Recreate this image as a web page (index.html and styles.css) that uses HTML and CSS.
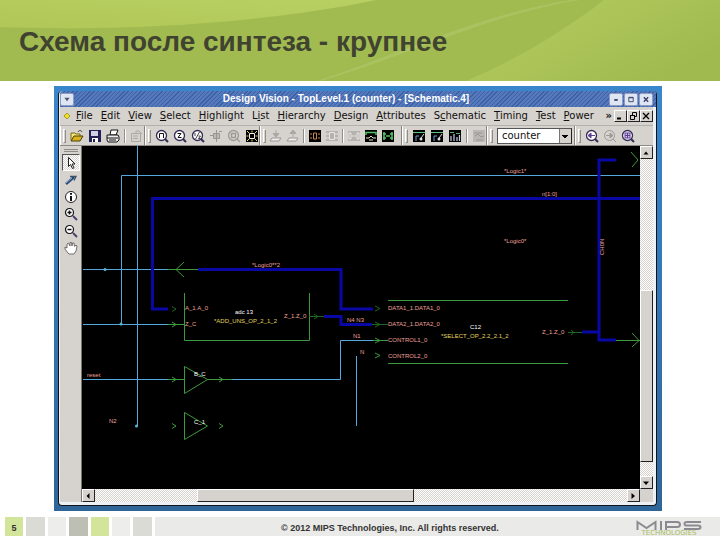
FILE: index.html
```html
<!DOCTYPE html>
<html lang="ru">
<head>
<meta charset="utf-8">
<title>Схема после синтеза - крупнее</title>
<link rel="stylesheet" href="styles.css">
</head>
<body>
<svg class="sprite" aria-hidden="true">
  <defs>
    <symbol id="open" viewBox="0 0 14 14"><path d="M1 11V4h4l1 1h4v2" fill="#f5e27a" stroke="#7a6a10"/><path d="M1 12l3-5h9l-3 5z" fill="#d8b21c" stroke="#4a3f08"/><path d="M8 3c1-2 3-2 4 0" fill="none" stroke="#333"/></symbol>
    <symbol id="save" viewBox="0 0 14 14"><path d="M1 1h12v12H1z" fill="#232058"/><path d="M3 2h7v5H3z" fill="#cfd0e6"/><path d="M4 9h6v4H4z" fill="#fff"/><path d="M5 10h2v3H5z" fill="#232058"/></symbol>
    <symbol id="print" viewBox="0 0 14 14"><path d="M4 6l1-5h7l-2 5z" fill="#fff" stroke="#111"/><path d="M1 6h11l1 2v3l-2 2H2l-1-2z" fill="#eee" stroke="#111"/><path d="M1 9h11M3 11h7" stroke="#111"/></symbol>
    <symbol id="props" viewBox="0 0 14 14"><path d="M1.500 4.500h9v8h-9zM3 7h5M3 9.500h5M6 4V2h3l3 3" fill="none" stroke="#aaa8a4"/></symbol>
    <symbol id="lens" viewBox="0 0 14 14"><circle cx="6.500" cy="6.500" r="5" fill="#fff" stroke="#332b55" stroke-width="1.300"/><path d="M10 10l3 3" stroke="#332b55" stroke-width="2"/></symbol>
    <symbol id="fit" viewBox="0 0 14 14"><use href="#lens"/><path d="M4.500 9V4.500h4V9" fill="none" stroke="#111"/></symbol>
    <symbol id="ztwo" viewBox="0 0 14 14"><use href="#lens"/><path d="M4.500 4.500h3.500L5 8.500h3.500" fill="none" stroke="#111"/></symbol>
    <symbol id="zhalf" viewBox="0 0 14 14"><use href="#lens"/><path d="M4 4v3M8.500 3l-4 7M7.500 7h2L7.500 9.500h2" fill="none" stroke="#111" stroke-width=".8"/></symbol>
    <symbol id="target" viewBox="0 0 14 14"><path d="M4.500 4.500h6v5h-6zM7.500 1v12M1 6.500h3M10 2.500h3" fill="#bbb9b5" stroke="#989691"/></symbol>
    <symbol id="glens" viewBox="0 0 14 14"><circle cx="6.500" cy="6.500" r="5" fill="none" stroke="#9d9b97" stroke-width="1.300"/><path d="M4.500 4.500h4v4h-4zM10 10l3 3" fill="none" stroke="#9d9b97" stroke-width="1.400"/></symbol>
    <symbol id="full" viewBox="0 0 14 14"><path d="M1 1h12v12H1z"/><path d="M4.500 4.500h5v5h-5z" fill="none" stroke="#eee"/><path d="M7 1.500v2M7 10.500v2M1.500 7h2M10.500 7h2M2 2l2 2M12 2l-2 2M2 12l2-2M12 12l-2-2" stroke="#e8e04a"/></symbol>
    <symbol id="down" viewBox="0 0 14 14"><path d="M7 1v4M4 4.500h6L7 8z" fill="#aaa8a4" stroke="#aaa8a4"/><path d="M1 12l2-3h9l-2 3z" fill="#eee" stroke="#999793"/></symbol>
    <symbol id="up" viewBox="0 0 14 14"><path d="M7 8V4M4 4.500h6L7 1z" fill="#aaa8a4" stroke="#aaa8a4"/><path d="M1 12l2-3h9l-2 3z" fill="#eee" stroke="#999793"/></symbol>
    <symbol id="chip" viewBox="0 0 14 14"><path d="M1 1h12v12H1z"/><path d="M5.500 4v6h3V4zM2 5h2M2 9h2M10 5h2M10 9h2" fill="none" stroke="#c9854c"/></symbol>
    <symbol id="gchip" viewBox="0 0 14 14"><path d="M1 2h12v10H1z" fill="#b5b3af"/><path d="M4.500 3.500h5v7h-5zM1 5h3M1 9h3M10 5h3M10 9h3" fill="none" stroke="#e8e6e2"/></symbol>
    <symbol id="gpair" viewBox="0 0 14 14"><path d="M1 2h12v10H1z" fill="#b5b3af"/><path d="M2 4v6h2V4zM10 4v6h2V4zM5 7h4" fill="none" stroke="#e8e6e2"/></symbol>
    <symbol id="loop" viewBox="0 0 14 14"><path d="M1 1h12v12H1z"/><path d="M2 6V3.500h10V6" fill="none" stroke="#56c060" stroke-width="1.500"/><path d="M2 9h3l2-2 2 2h3M5 11h4" fill="none" stroke="#e6e6c8"/></symbol>
    <symbol id="pair" viewBox="0 0 14 14"><path d="M1 1h12v12H1z"/><path d="M3 3v8M2 5h3M2 9h3M11 3v8M9 5h3M9 9h3M5 7h4" stroke="#4fc766" stroke-width="1.500"/></symbol>
    <symbol id="graph" viewBox="0 0 14 14"><path d="M1 1h12v12H1z"/><path d="M1 3.500h12" stroke="#5bc47a"/><path d="M4 12V7h3" fill="none" stroke="#6aa0d8"/><path d="M12 5l-3 4" stroke="#ddd"/><circle cx="9" cy="10" r="1.500" fill="#ddd"/></symbol>
    <symbol id="bars" viewBox="0 0 14 14"><path d="M1 1h12v12H1z"/><path d="M2 3.500h4M8 4.500h4" stroke="#56ae70"/><path d="M3 12V7M6 12V5M9 12V8M11.500 12V6" stroke="#c8cce8" stroke-width="1.200"/></symbol>
    <symbol id="gbars" viewBox="0 0 14 14"><path d="M1 1h12v12H1z" fill="#b9b7b3"/><path d="M2 4h8M3 7l3-2 3 3 3-1M4 11h7" fill="none" stroke="#999793"/></symbol>
    <symbol id="prev" viewBox="0 0 14 14"><use href="#lens"/><path d="M3 6.500L6 4v5zM5 6.500h5" fill="#5b3d91" stroke="#5b3d91"/></symbol>
    <symbol id="next" viewBox="0 0 14 14"><circle cx="6.500" cy="6.500" r="5" fill="none" stroke="#9d9b97"/><path d="M10 6.500L7 4v5zM3 6.500h5M10 10l3 3" fill="#9d9b97" stroke="#9d9b97"/></symbol>
    <symbol id="sel" viewBox="0 0 14 14"><use href="#lens"/><path d="M4 4h5v5H4zM4 6.500h5M6.500 4v5" fill="#d9c9ef" stroke="#5b3d91"/></symbol>
    <symbol id="cursor" viewBox="0 0 14 14"><path d="M4.500 1.500v9l2-2 2 4 1.500-.700-2-3.800h3z" fill="#fff" stroke="#222"/></symbol>
    <symbol id="pencil" viewBox="0 0 14 14"><path d="M2 11l8-7" stroke="#28456e" stroke-width="2.500"/><path d="M6 3.500h6l-2 4" fill="none" stroke="#38506e" stroke-width="1.300"/><path d="M2 10l6-5" stroke="#8ab3e0"/></symbol>
    <symbol id="info" viewBox="0 0 14 14"><circle cx="7" cy="7" r="5.500" fill="#fff" stroke="#222"/><path d="M7 3v1.800M7 6v5" stroke="#111" stroke-width="2"/></symbol>
    <symbol id="zin" viewBox="0 0 14 14"><circle cx="5.500" cy="5.500" r="4" fill="#fff" stroke="#111" stroke-width="1.200"/><path d="M3.500 5.500h4M5.500 3.500v4" stroke="#111" stroke-width="1.500"/><path d="M9 9l4 4" stroke="#4a4072" stroke-width="2"/></symbol>
    <symbol id="zout" viewBox="0 0 14 14"><circle cx="5.500" cy="5.500" r="4" fill="#fff" stroke="#111" stroke-width="1.200"/><path d="M3.500 5.500h4" stroke="#111" stroke-width="1.500"/><path d="M9 9l4 4" stroke="#4a4072" stroke-width="2"/></symbol>
    <symbol id="hand" viewBox="0 0 14 14"><path d="M4 12L1 8V6l2 1V3l1.500-1L6 5V1.500h1.500L8 5l.500-3H10l.500 3.500L12 4l1 1-1 5-2 3H5z" fill="#fff" stroke="#55524e" stroke-width=".8"/></symbol>
  </defs>
</svg>

<header class="banner">
  <svg class="banner-art" viewBox="0 0 720 81" preserveAspectRatio="none" aria-hidden="true">
    <defs>
      <linearGradient id="leaf" x1="0" y1="1" x2="1" y2="0"><stop offset="0" stop-color="#b1c858"/><stop offset="1" stop-color="#b8cf62"/></linearGradient>
      <linearGradient id="right" x1="0" y1="0" x2="1" y2=".6"><stop offset="0" stop-color="#b3ca5a"/><stop offset=".35" stop-color="#b0c75a"/><stop offset="1" stop-color="#a0ba50"/></linearGradient>
    </defs>
    <path d="M0 0h376C280 20 150 32 0 27z" fill="url(#leaf)"/>
    <path d="M604 0h116v81H466C520 58 565 30 604 0z" fill="url(#right)"/>
    <path d="M317 81C410 50 480 14 572 0h8C490 14 415 53 321 81z" fill="#aac361"/>
  </svg>
  <h1>Схема после синтеза - крупнее</h1>
</header>

<main class="stage">
  <div class="desktop">
    <section class="window">
      <div class="titlebar">
        <button class="wm" aria-label="Menu"><svg viewBox="0 0 10 8"><path d="M2 2l3 4 3-4z" fill="#4b5470"/></svg></button>
        <span class="caption">Design Vision - TopLevel.1 (counter) - [Schematic.4]</span>
        <button class="wm" aria-label="Minimize"><svg viewBox="0 0 10 8"><path d="M3 4.500h4" stroke="#333c66" stroke-width="2"/></svg></button>
        <button class="wm" aria-label="Maximize"><svg viewBox="0 0 10 8"><path d="M2.500 1.500h5v5h-5zM2.500 2h5" fill="none" stroke="#333c66"/></svg></button>
        <button class="wm" aria-label="Close"><svg viewBox="0 0 10 8"><path d="M2.500 1.500l5 5M7.500 1.500l-5 5" stroke="#333c66" stroke-width="1.500"/></svg></button>
      </div>

      <nav class="menubar">
        <svg class="gem" viewBox="0 0 8 8" aria-hidden="true"><path d="M4 1l3 3-3 3-3-3z" fill="#f1e21c" stroke="#a39a2c"/></svg>
        <button><u>F</u>ile</button><button><u>E</u>dit</button><button><u>V</u>iew</button><button><u>S</u>elect</button><button><u>H</u>ighlight</button><button>L<u>i</u>st</button><button><u>H</u>ierarchy</button><button><u>D</u>esign</button><button><u>A</u>ttributes</button><button>S<u>c</u>hematic</button><button><u>T</u>iming</button><button><u>T</u>est</button><button><u>P</u>ower</button>
        <button class="more">»</button>
        <span class="mdi">
          <button aria-label="Minimize"><svg viewBox="0 0 10 10"><path d="M2 7.500h4" stroke="#000" stroke-width="2"/></svg></button>
          <button aria-label="Restore"><svg viewBox="0 0 10 10"><path d="M4.500 4V1.500h4v4H7M2.500 4.500h4v4h-4zM2 4.500h5" fill="none" stroke="#000"/></svg></button>
          <button aria-label="Close"><svg viewBox="0 0 10 10"><path d="M2 2l6 6M8 2l-6 6" stroke="#000" stroke-width="1.300"/></svg></button>
        </span>
      </nav>

      <div class="toolbars">
        <div class="group wide"><i class="grip"></i><button aria-label="Open"><svg><use href="#open"/></svg></button><button aria-label="Save"><svg><use href="#save"/></svg></button><button aria-label="Print"><svg><use href="#print"/></svg></button><i class="sep"></i><button aria-label="Properties"><svg><use href="#props"/></svg></button></div>
        <div class="group wide"><i class="grip"></i><button aria-label="Fit"><svg><use href="#fit"/></svg></button><button aria-label="Zoom 2"><svg><use href="#ztwo"/></svg></button><button aria-label="Zoom 1/2"><svg><use href="#zhalf"/></svg></button><button aria-label="Center"><svg><use href="#target"/></svg></button><button aria-label="Zoom selection"><svg><use href="#glens"/></svg></button><button aria-label="Full"><svg><use href="#full"/></svg></button></div>
        <div class="group"><i class="grip"></i><button aria-label="Push down"><svg><use href="#down"/></svg></button><button aria-label="Pop up"><svg><use href="#up"/></svg></button><i class="sep"></i><button aria-label="Schematic"><svg><use href="#chip"/></svg></button><button aria-label="Symbol"><svg><use href="#gchip"/></svg></button><i class="sep"></i><button aria-label="Paths"><svg><use href="#gpair"/></svg></button><button aria-label="Fan"><svg><use href="#loop"/></svg></button><button aria-label="Pins"><svg><use href="#pair"/></svg></button></div>
        <div class="group wide"><i class="grip"></i><button aria-label="Slack"><svg><use href="#graph"/></svg></button><button aria-label="Load"><svg><use href="#graph"/></svg></button><button aria-label="Histogram"><svg><use href="#bars"/></svg></button><i class="sep"></i><button aria-label="Chart"><svg><use href="#gbars"/></svg></button></div>
        <div class="group wide pick"><i class="grip"></i><select aria-label="Design"><option>counter</option></select></div>
        <div class="group wide last"><i class="grip"></i><button aria-label="Previous"><svg><use href="#prev"/></svg></button><button aria-label="Next"><svg><use href="#next"/></svg></button><button aria-label="Selection"><svg><use href="#sel"/></svg></button></div>
      </div>

      <div class="work">
        <div class="tools">
          <i class="hgrip"></i>
          <button class="on" aria-label="Select"><svg><use href="#cursor"/></svg></button>
          <button aria-label="Edit"><svg><use href="#pencil"/></svg></button>
          <button aria-label="Info"><svg><use href="#info"/></svg></button>
          <button aria-label="Zoom in"><svg><use href="#zin"/></svg></button>
          <button aria-label="Zoom out"><svg><use href="#zout"/></svg></button>
          <button aria-label="Pan"><svg><use href="#hand"/></svg></button>
        </div>

        <div class="canvas">
          <svg class="schematic" viewBox="82 146 558 343" preserveAspectRatio="xMinYMin meet">
            <g class="net">
              <path d="M137.500 146v280"/>
              <path d="M640 175.500H121.500V324"/>
              <path d="M83 269.500h85M83 324.500h85M83 379.500h85M232 379.500h108.500v-39H373M356.500 356v70"/>
            </g>
            <g class="dots"><circle cx="105" cy="269.500" r="1.500"/><circle cx="121" cy="324" r="1.500"/><circle cx="136.500" cy="426" r="1.500"/></g>
            <g class="bus">
              <path d="M640 198.500H152.500V309H168"/>
              <path d="M198 269.500h143V309h32"/>
              <path d="M324 316.500h17v8h31"/>
              <path d="M616 160H599v180h17M582 332h17"/>
            </g>
            <g class="cell">
              <path d="M184.500 293v47.500h125V293M388 300.500h180M388 363.500h180"/>
              <path d="M168 269.500h30M168 324.500h17M168 379.500h16M207 379.500h25M373 340.500h15M616 340.500h24"/>
              <path d="M184.500 366.500v27l23-14zM184.500 412.500v27l23-13.500z"/>
              <path d="M184 262l-8 7.500 8 7.500M632 333l7 7.500-7 6.500M631 152l7 8-6 7"/>
              <path d="M172 322l4 2.500-4 2.500M172 377l4 2.500-4 2.500M219 377l4 2.500-4 2.500M172 423.500l4 2.500-4 2.500M219 423.500l4 2.500-4 2.500M375 338l5 2.500-5 2.500M375 353l5 2.500-5 2.500"/>
            </g>
            <g class="cell dim"><path d="M309 316.500h15M372 324.500h16M568 332.500h14M172 306.500l4 2.500-4 2.500M314 314l4 2.500-4 2.500M375 306l5 2.500-5 2.500M375 322l5 2.500-5 2.500M571 330l3 2.500-3 2.500"/></g>
            <g class="pin">
              <text x="504" y="173">*Logic1*</text><text x="542" y="196">n[1:0]</text><text x="504" y="243">*Logic0*</text>
              <text x="252" y="267">*Logic0**2</text>
              <text x="185" y="310">A_1.A_0</text><text x="185" y="326">Z_C</text>
              <text x="284" y="318">Z_1.Z_0</text><text x="347" y="322">N4 N3</text><text x="353" y="338">N1</text><text x="360" y="354">N</text>
              <text x="388" y="310">DATA1_1.DATA1_0</text><text x="388" y="326">DATA2_1.DATA2_0</text><text x="388" y="342">CONTROL1_0</text><text x="388" y="358">CONTROL2_0</text>
              <text x="542" y="334">Z_1.Z_0</text>
              <text x="87" y="377">reset</text><text x="109" y="423">N2</text>
              <text transform="translate(604 255) rotate(-90)">CH0N</text>
            </g>
            <g class="name"><text x="235" y="314">adc 13</text><text x="470" y="329">C12</text><text x="194" y="376">B_C</text><text x="194" y="424">C_1</text></g>
            <g class="ref"><text x="214" y="323">*ADD_UNS_OP_2_1_2</text><text x="441" y="338">*SELECT_OP_2.2_2.1_2</text></g>
          </svg>
        </div>

        <div class="vscroll">
          <button aria-label="Up"><svg viewBox="0 0 8 8"><path d="M1.500 5.500L4 2.500l2.500 3z"/></svg></button>
          <span class="gap-a"></span><span class="thumb"></span><span class="gap-b"></span>
          <button aria-label="Down"><svg viewBox="0 0 8 8"><path d="M1 2.500L4 6l3-3.500z"/></svg></button>
        </div>
        <div class="hscroll">
          <button aria-label="Left"><svg viewBox="0 0 8 8"><path d="M5.500 1L2.500 4l3 3z"/></svg></button>
          <span class="gap-a"></span><span class="thumb"></span><span class="gap-b"></span>
          <button aria-label="Right"><svg viewBox="0 0 8 8"><path d="M2.500 1L6 4 2.500 7z"/></svg></button>
        </div>
      </div>
    </section>
  </div>
</main>

<footer class="footer">
  <span class="tile lime">5</span><span class="tile ash"></span><span class="tile pale"></span><span class="tile stone"></span><span class="tile lime"></span><span class="tile pale"></span><span class="tile ash"></span>
  <div class="strip">
    <span class="legal">© 2012 MIPS Technologies, Inc. All rights reserved.</span>
    <span class="logo">
      <svg viewBox="0 0 66 10" role="img" aria-label="MIPS"><path d="M1.500 10V2l9 6 9-6v8M25 1v9M30 10V2h11q3 0 3 2.500T41 7H31M65 2H51q-2.500 0-2.500 1.800T51 5.500h11q2.500 0 2.500 1.700T62 9H48" fill="none" stroke="#8c8a90" stroke-width="2"/></svg>
      <span>TECHNOLOGIES</span>
    </span>
  </div>
</footer>
</body>
</html>
```
FILE: styles.css
```css
* { box-sizing: border-box; }

body {
  margin: 0;
  min-height: 100vh;
  display: flex;
  flex-direction: column;
  background: #fff;
  color: #333;
  font-family: "Liberation Sans", Arial, sans-serif;
}

button {
  margin: 0;
  padding: 0;
  border: 0;
  background: none;
  color: inherit;
  font: inherit;
}

svg { display: block; }
.sprite { position: absolute; width: 0; height: 0; }

/* Banner */
.banner {
  position: relative;
  height: 81px;
  padding: 27px 19px 0;
  background: #a1bb50;
}
.banner-art { position: absolute; inset: 0; width: 100%; height: 100%; }
.banner h1 {
  position: relative;
  margin: 0;
  color: #3f4330;
  font-size: 28px;
  line-height: 30px;
}

/* Desktop and window */
.stage { flex: 1; display: flex; padding: 5px 58px 6px 54px; }
.desktop {
  flex: 1;
  display: flex;
  min-width: 0;
  padding: 5px 5px 5px 4px;
  background: linear-gradient(#3a86cc, #2f669a);
}
.window {
  flex: 1;
  display: flex;
  flex-direction: column;
  min-width: 0;
  padding: 0 3px 3px 1px;
  border: 1px solid #10131c;
  border-top: 0;
  border-radius: 4px;
  background: #eef1f3;
}

.titlebar {
  display: flex;
  align-items: center;
  height: 16px;
  margin-right: -3px;
  padding: 0 2px 0 0;
  border-radius: 3px 3px 0 0;
  background: repeating-linear-gradient(135deg, #3d61a6 0 1px, #5579bb 1px 3px);
}
.caption {
  flex: 1;
  padding-left: 8px;
  color: #fff;
  font-size: 10px;
  font-weight: bold;
  line-height: 16px;
  text-align: center;
  white-space: nowrap;
}
.wm {
  width: 14px;
  height: 13px;
  margin-right: 1px;
  padding: 2px 1px;
  border: 1px solid #8c9cc4;
  border-radius: 2px;
  background: #dfe5f3;
}
.wm svg { width: 10px; height: 7px; }

.menubar {
  display: flex;
  align-items: center;
  gap: 8px;
  height: 18px;
  padding-left: 3px;
  background: #d6d3ce;
  color: #111;
  font: 10px/16px "DejaVu Sans", sans-serif;
}
.gem { flex: none; width: 8px; height: 8px; margin-right: -3px; }
.menubar .more { margin-left: auto; font-weight: bold; }
.mdi { display: flex; margin-left: -6px; }
.mdi button {
  width: 13px;
  height: 12px;
  border: 1px solid;
  border-color: #fff #222 #222 #fff;
}
.mdi svg { width: 10px; height: 10px; }

.toolbars {
  display: flex;
  height: 21px;
  background: #d6d3ce;
  border-top: 1px solid #b4b1ac;
  border-bottom: 1px solid #8d8a86;
}
.group {
  display: flex;
  align-items: center;
  gap: 3px;
  padding: 0 6px 0 2px;
  border-left: 1px solid #fff;
  border-right: 1px solid #85827e;
}
.group.wide { gap: 4px; padding-right: 0; }
.group svg { width: 14px; height: 14px; }
.group.last { border-right: 0; }
.grip {
  width: 3px;
  height: 14px;
  border: 1px solid;
  border-color: #fff #918e8a #918e8a #fff;
}
.sep { width: 2px; height: 14px; border-left: 1px solid #918e8a; border-right: 1px solid #fff; }
.group.pick { padding-right: 2px; }
.pick select {
  width: 75px;
  height: 16px;
  padding: 0 4px;
  appearance: none;
  border: 1px solid #555;
  border-right-color: #222;
  border-radius: 0;
  color: #111;
  font: 10px/14px "DejaVu Sans", sans-serif;
  background:
    conic-gradient(from -45deg at 50% 100%, #000 90deg, transparent 0) right 3px top 6px / 6px 3px no-repeat,
    linear-gradient(90deg, #777 1px, #d6d3ce 1px) right / 12px 100% no-repeat,
    #fff;
}

/* Work area */
.work {
  flex: 1;
  display: grid;
  grid-template-columns: 22px minmax(0, 1fr) 13px;
  grid-template-rows: minmax(0, 1fr) 13px;
  background: #d6d3ce;
}
.tools {
  grid-row: 1 / 3;
  display: flex;
  flex-direction: column;
  align-items: center;
  padding-top: 3px;
  border-right: 1px solid #77746f;
  background: #d6d3ce;
}
.tools button { width: 18px; height: 17px; padding: 1px 2px; }
.tools svg { width: 14px; height: 14px; }
.tools .on { padding: 0 1px; border: 1px solid; border-color: #555 #fff #fff #555; }
.hgrip { width: 14px; height: 3px; margin-bottom: 2px; border-top: 1px solid #8d8a86; border-bottom: 1px solid #8d8a86; }

.vscroll, .hscroll, .tools .on {
  background: repeating-conic-gradient(#fff 0 25%, #d6d3ce 0 50%) 0 0 / 2px 2px;
}
.vscroll { display: flex; flex-direction: column; }
.hscroll { grid-column: 2; display: flex; }
.vscroll button, .hscroll button, .thumb {
  border: 1px solid;
  border-color: #fff #222 #222 #fff;
  background: #d6d3ce;
}
.vscroll button, .hscroll button { flex: none; width: 13px; height: 13px; padding: 1px; }
.vscroll svg, .hscroll svg { width: 8px; height: 8px; }
.vscroll .gap-a { flex: 132; }
.vscroll .thumb { flex: 172; }
.vscroll .gap-b { flex: 14; }
.hscroll .gap-a { flex: 102; }
.hscroll .thumb { flex: 216; }
.hscroll .gap-b { flex: 214; }

.canvas { min-width: 0; min-height: 0; background: #000; overflow: hidden; }
.schematic { width: 100%; }
.schematic path { fill: none; }
.net { stroke: #55a8dc; stroke-width: 1; }
.dots { fill: #5cb4d8; }
.bus { stroke: #0a08a4; stroke-width: 3; }
.cell { stroke: #3c9a3c; stroke-width: 1; }
.dim { stroke: #1f661f; }
.schematic text { font-size: 6px; }
.pin { fill: #f0a09a; }
.name { fill: #fff; }
.ref { fill: #e6d560; }

/* Footer */
.footer {
  display: flex;
  gap: 3px;
  height: 23px;
  padding: 0 0 4px 5px;
}
.tile {
  width: 18px;
  color: #333;
  font-size: 9px;
  font-weight: bold;
  line-height: 22px;
  text-align: center;
}
.tile.ash, .tile.stone { width: 19px; }
.lime { background: #d3e59a; }
.ash { background: #dadbd5; }
.pale { background: #ededeb; }
.stone { background: #bebfb4; }
.strip {
  flex: 1;
  display: flex;
  justify-content: space-between;
  padding: 0 18px 0 126px;
  background: #eaeae8;
}
.legal { color: #333; font-size: 9px; font-weight: bold; line-height: 22px; white-space: nowrap; }
.logo { width: 66px; padding-top: 3px; color: #a9bd62; font: 7px/7px "DejaVu Sans", sans-serif; text-align: center; }
.logo svg { width: 66px; height: 10px; }
.logo span { display: block; }
```
